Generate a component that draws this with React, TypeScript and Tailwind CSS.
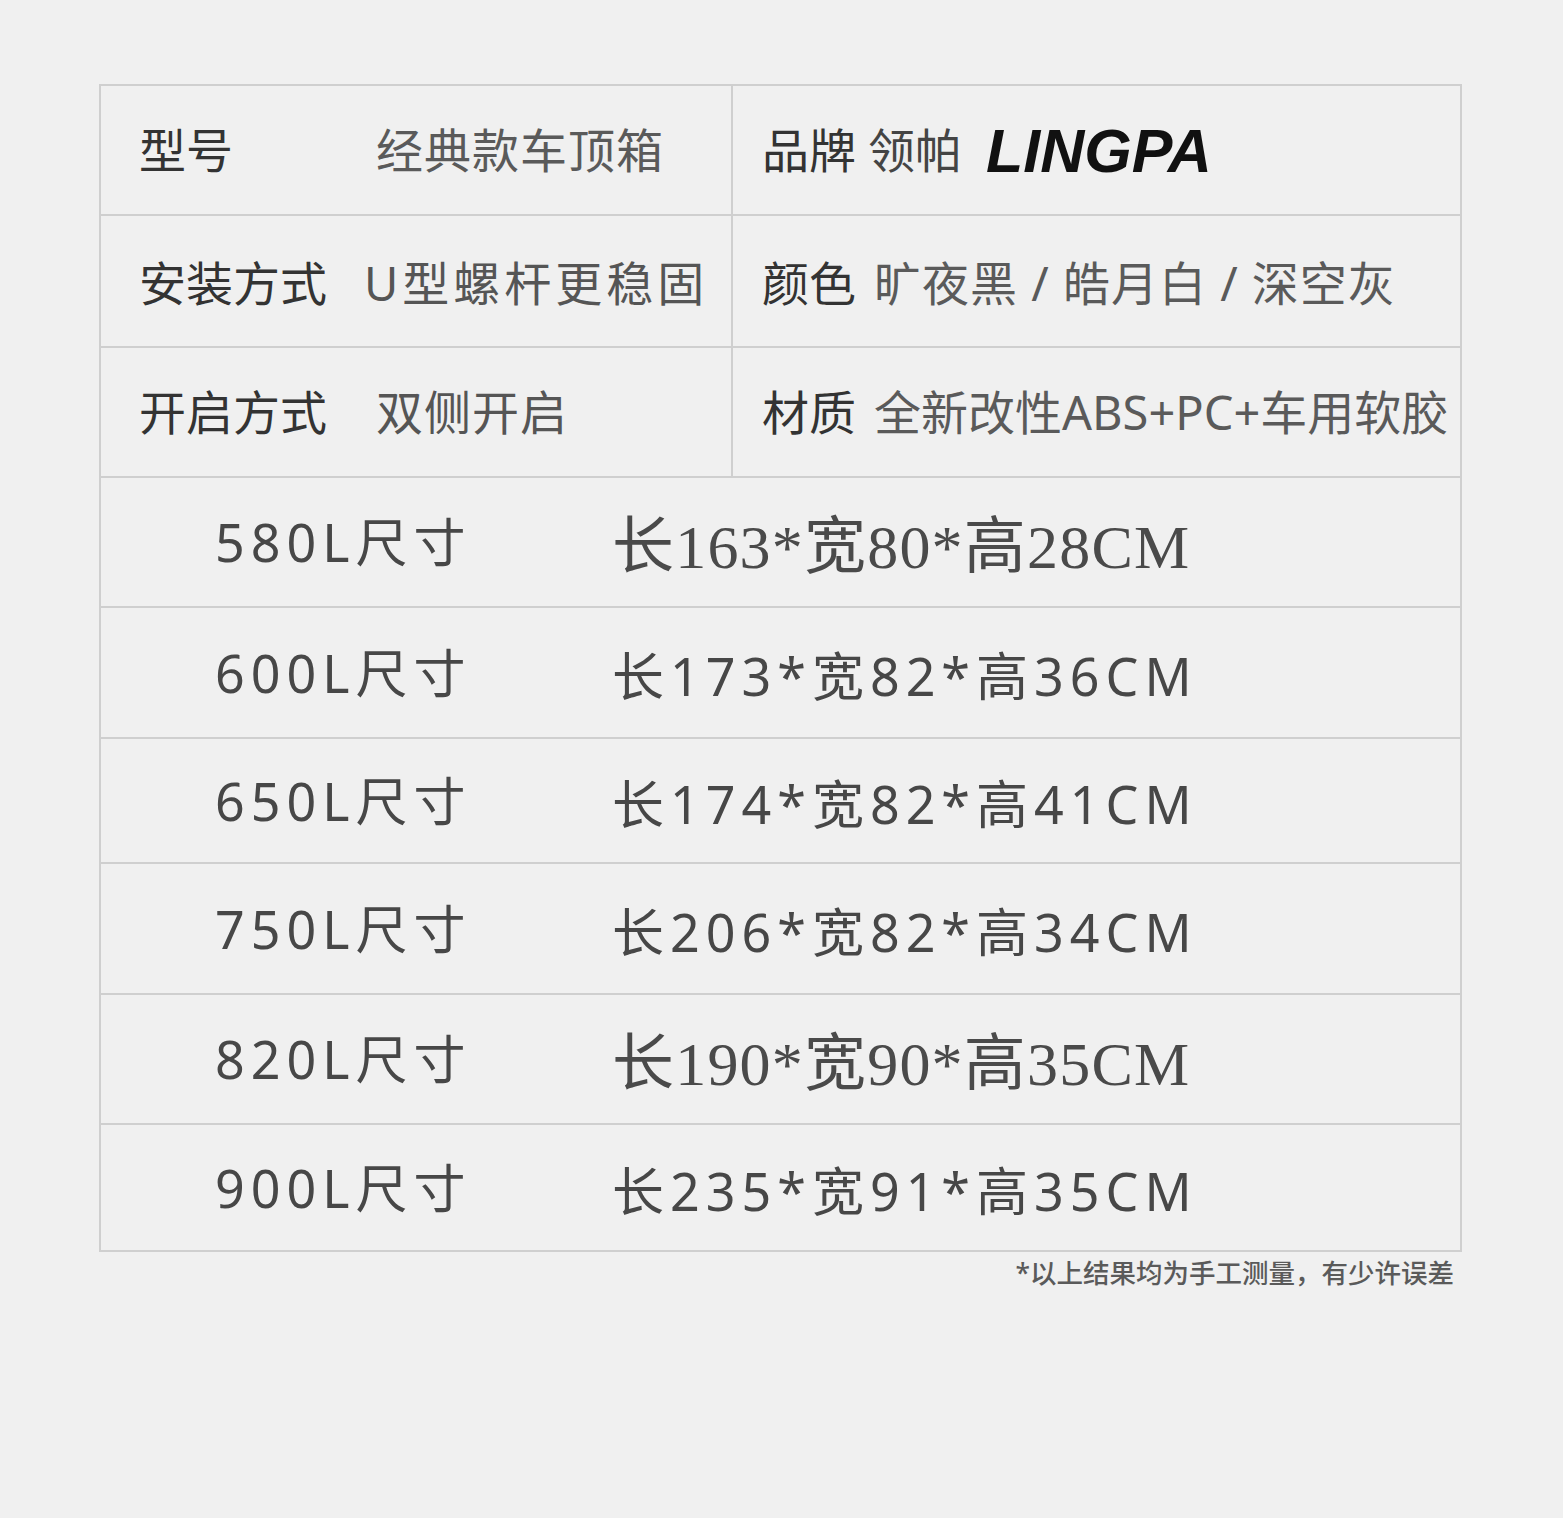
import React from "react";

const sans = "font-['Noto_Sans','Noto_Sans_CJK_SC',sans-serif]";

const sizes: { label: string; value: string; h: string; serif?: boolean }[] = [
  { label: "580L尺寸", value: "长163*宽80*高28CM", h: "h-[130px]", serif: true },
  { label: "600L尺寸", value: "长173*宽82*高36CM", h: "h-[131px]" },
  { label: "650L尺寸", value: "长174*宽82*高41CM", h: "h-[125px]" },
  { label: "750L尺寸", value: "长206*宽82*高34CM", h: "h-[131px]" },
  { label: "820L尺寸", value: "长190*宽90*高35CM", h: "h-[130px]", serif: true },
  { label: "900L尺寸", value: "长235*宽91*高35CM", h: "h-[125px]" },
];

export default function App() {
  return (
    <div className={`w-full h-[1518px] bg-[#f0f0f0] pt-[84px] pl-[99px] ${sans}`}>
      <div className="w-[1363px] border-2 border-[#cfcfcf] bg-[#f0f0f0]">
        {/* Row 1 */}
        <div className="grid grid-cols-[632px_1fr] h-[130px] border-b-2 border-[#cfcfcf]">
          <div className="flex items-center pl-[38px] border-r-2 border-[#cfcfcf] text-[47px] leading-none">
            <span className="text-[#333] w-[237px]">型号</span>
            <span className="text-[#5a5a5a] tracking-[1px]">经典款车顶箱</span>
          </div>
          <div className="flex items-center pl-[29px] text-[47px] leading-none">
            <span className="text-[#333] mr-[12px]">品牌</span>
            <span className="text-[#444] mr-[24px]">领帕</span>
            <span className="font-['Liberation_Sans',sans-serif] font-bold italic text-[61px] text-[#111] tracking-[0px] mt-[2px]">
              LINGPA
            </span>
          </div>
        </div>
        {/* Row 2 */}
        <div className="grid grid-cols-[632px_1fr] h-[132px] border-b-2 border-[#cfcfcf]">
          <div className="flex items-center pl-[38px] border-r-2 border-[#cfcfcf] text-[47px] leading-none pt-[4px]">
            <span className="text-[#333] w-[225px]">安装方式</span>
            <span className="text-[#555] tracking-[4px]">U型螺杆更稳固</span>
          </div>
          <div className="flex items-center pl-[29px] text-[47px] leading-none pt-[4px]">
            <span className="text-[#333] mr-[18px]">颜色</span>
            <span className="text-[#5a5a5a] tracking-[1px] whitespace-pre">旷夜黑 / 皓月白 / 深空灰</span>
          </div>
        </div>
        {/* Row 3 */}
        <div className="grid grid-cols-[632px_1fr] h-[130px] border-b-2 border-[#cfcfcf]">
          <div className="flex items-center pl-[38px] border-r-2 border-[#cfcfcf] text-[47px] leading-none">
            <span className="text-[#333] w-[237px]">开启方式</span>
            <span className="text-[#555] tracking-[1px]">双侧开启</span>
          </div>
          <div className="flex items-center pl-[29px] text-[47px] leading-none">
            <span className="text-[#333] mr-[18px]">材质</span>
            <span className="text-[#5a5a5a]">全新改性ABS+PC+车用软胶</span>
          </div>
        </div>
        {/* Size rows */}
        {sizes.map((s, i) => (
          <div
            key={s.label}
            className={`flex items-center ${s.h} ${i < sizes.length - 1 ? "border-b-2 border-[#cfcfcf]" : ""} pl-[114px]`}
          >
            <span className="w-[397px] text-[52px] leading-none tracking-[6px] text-[#474747]">{s.label}</span>
            {s.serif ? (
              <span className="font-['Liberation_Serif','Noto_Sans_CJK_SC',serif] text-[62px] leading-none tracking-[1.2px] text-[#4a4a4a] mt-[10px]">
                {s.value}
              </span>
            ) : (
              <span className="text-[52px] leading-none tracking-[6px] text-[#474747] mt-[6px]">{s.value}</span>
            )}
          </div>
        ))}
      </div>
      <div className="w-[1363px] flex justify-end pr-[8px] mt-[8px]">
        <span className="text-[26.5px] font-medium text-[#5a5a5a] leading-none">*以上结果均为手工测量，有少许误差</span>
      </div>
    </div>
  );
}
